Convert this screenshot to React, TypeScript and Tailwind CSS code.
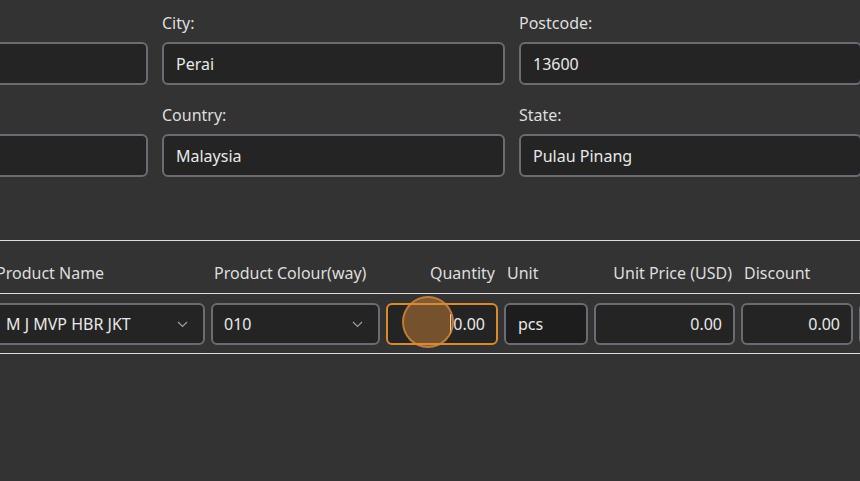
function Field({ label, value }: { label: string; value: string }) {
  return (
    <div className="flex flex-col">
      <div className="h-[20px] leading-[20px] text-[16px] text-[#dedede]">{label}</div>
      <div className="mt-[9px] h-[43px] flex items-center rounded-[6px] border-2 border-[#696c72] bg-[#242424] px-[12px] text-[16px] text-[#e8e8e8]">
        {value}
      </div>
    </div>
  );
}

function Chevron() {
  return (
    <svg width="11" height="7" viewBox="0 0 11 7" fill="none" className="shrink-0">
      <path d="M1 1l4.5 4.5L10 1" stroke="#9c9ea3" strokeWidth="1.2" />
    </svg>
  );
}

function Select({ value, w }: { value: string; w: string }) {
  return (
    <div
      className={[
        "h-[42px] flex items-center justify-between rounded-[6px] border-2 border-[#696c72] bg-[#242424] pl-[11px] pr-[15px] text-[16px] text-[#e8e8e8] shrink-0",
        w,
      ].join(" ")}
    >
      <span>{value}</span>
      <Chevron />
    </div>
  );
}

function NumBox({ value, w }: { value: string; w: string }) {
  return (
    <div
      className={[
        "h-[42px] flex items-center justify-end rounded-[6px] border-2 border-[#696c72] bg-[#242424] px-[11px] text-[16px] text-[#e8e8e8] shrink-0",
        w,
      ].join(" ")}
    >
      {value}
    </div>
  );
}

export default function App() {
  return (
    <div
      className="relative w-[860px] h-[481px] overflow-hidden bg-[#333333]"
      style={{ fontFamily: '"Noto Sans", "Open Sans", sans-serif' }}
    >
      {/* address fields */}
      <div className="ml-[-195px] pt-[13px] grid grid-cols-[343px_343px_343px] gap-x-[14px] gap-y-[20px]">
        <Field label={"\u00a0"} value="" />
        <Field label="City:" value="Perai" />
        <Field label="Postcode:" value="13600" />
        <Field label={"\u00a0"} value="" />
        <Field label="Country:" value="Malaysia" />
        <Field label="State:" value="Pulau Pinang" />
      </div>

      {/* line items table */}
      <div className="mt-[63px] border-t border-[#dcdcdc]">
        <div className="ml-[-7px] h-[52px] pt-[22px] flex gap-[6px] text-[16px] leading-[20px] text-[#dedede] whitespace-nowrap">
          <div className="w-[212px] shrink-0 pl-[3px]">Product Name</div>
          <div className="w-[169px] shrink-0 pl-[3px]">Product Colour(way)</div>
          <div className="w-[112px] shrink-0 pr-[3px] text-right">Quantity</div>
          <div className="w-[84px] shrink-0 pl-[3px]">Unit</div>
          <div className="w-[141px] shrink-0 pr-[3px] text-right">Unit Price (USD)</div>
          <div className="w-[112px] shrink-0 pl-[3px]">Discount</div>
        </div>
        <div className="border-t border-[#dcdcdc] border-b h-[61px] pt-[9px]">
          <div className="ml-[-7px] flex gap-[6px] whitespace-nowrap">
            <Select value="M J MVP HBR JKT" w="w-[212px]" />
            <Select value="010" w="w-[169px]" />
            <div className="w-[112px] h-[42px] shrink-0 flex items-center justify-end rounded-[6px] border-2 border-[#d98b2b] bg-[#242424] px-[11px] text-[16px] text-[#e8e8e8]">
              <span className="w-px h-[20px] bg-white mr-[2px]" />
              0.00
            </div>
            <div className="w-[84px] h-[42px] shrink-0 flex items-center rounded-[6px] border-2 border-[#696c72] bg-[#1d1d1d] px-[12px] text-[16px] text-[#e8e8e8]">
              pcs
            </div>
            <NumBox value="0.00" w="w-[141px]" />
            <NumBox value="0.00" w="w-[112px]" />
            <NumBox value="" w="w-[112px]" />
          </div>
        </div>
      </div>

      {/* click indicator */}
      <div className="absolute left-[402px] top-[296px] w-[52px] h-[52px] rounded-full bg-[#d98b3a]/45 border-2 border-[#d98b3a]/75" />
    </div>
  );
}
